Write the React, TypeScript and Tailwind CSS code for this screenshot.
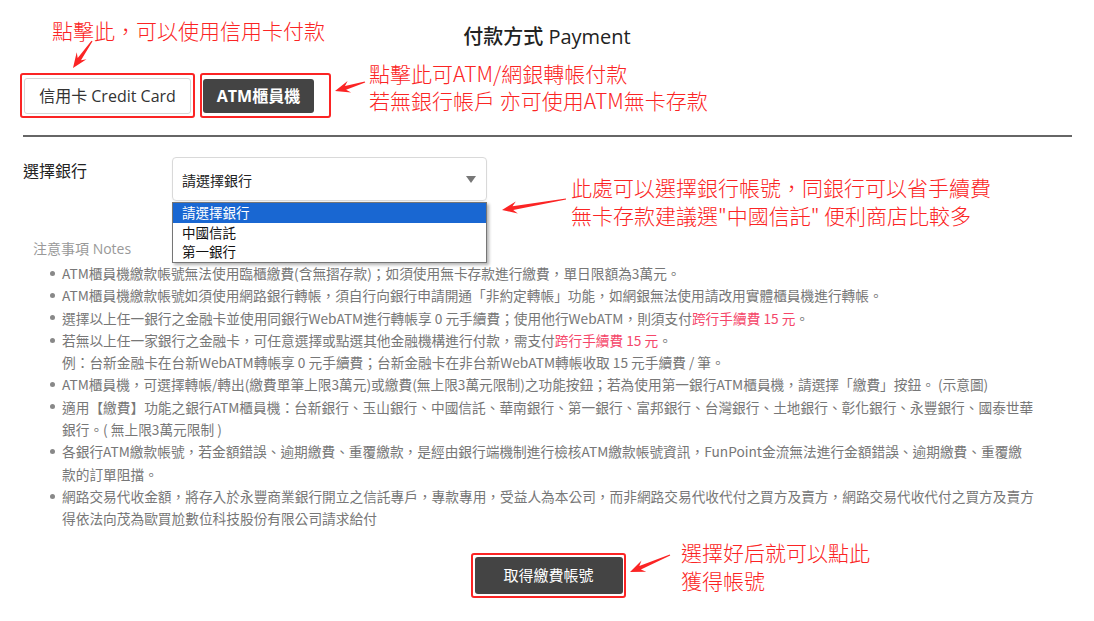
import React from "react";

const RED = "#fb2424";

function Arrow({ x1, y1, x2, y2 }: { x1: number; y1: number; x2: number; y2: number }) {
  const dx = x2 - x1;
  const dy = y2 - y1;
  const len = Math.hypot(dx, dy);
  const ux = dx / len;
  const uy = dy / len;
  const nx = -uy;
  const ny = ux;
  const L = 15;
  const w = 6;
  const bx = x2 - ux * L;
  const by = y2 - uy * L;
  const nbx = x2 - ux * (L - 4);
  const nby = y2 - uy * (L - 4);
  const p = (x: number, y: number) => `${x.toFixed(1)},${y.toFixed(1)}`;
  const pts = [
    p(x1 + nx * 0.6, y1 + ny * 0.6),
    p(nbx + nx * 2, nby + ny * 2),
    p(bx + nx * w, by + ny * w),
    p(x2, y2),
    p(bx - nx * w, by - ny * w),
    p(nbx - nx * 2, nby - ny * 2),
    p(x1 - nx * 0.6, y1 - ny * 0.6),
  ].join(" ");
  return <polygon points={pts} fill={RED} />;
}

const notes: React.ReactNode[] = [
  <>ATM櫃員機繳款帳號無法使用臨櫃繳費(含無摺存款)；如須使用無卡存款進行繳費，單日限額為3萬元。</>,
  <>ATM櫃員機繳款帳號如須使用網路銀行轉帳，須自行向銀行申請開通「非約定轉帳」功能，如網銀無法使用請改用實體櫃員機進行轉帳。</>,
  <>
    選擇以上任一銀行之金融卡並使用同銀行WebATM進行轉帳享 0 元手續費；使用他行WebATM，則須支付
    <span className="text-[#f5476a]">跨行手續費 15 元</span>。
  </>,
  <>
    若無以上任一家銀行之金融卡，可任意選擇或點選其他金融機構進行付款，需支付
    <span className="text-[#f5476a]">跨行手續費 15 元</span>。
    <br />
    例：台新金融卡在台新WebATM轉帳享 0 元手續費；台新金融卡在非台新WebATM轉帳收取 15 元手續費 / 筆。
  </>,
  <>ATM櫃員機，可選擇轉帳/轉出(繳費單筆上限3萬元)或繳費(無上限3萬元限制)之功能按鈕；若為使用第一銀行ATM櫃員機，請選擇「繳費」按鈕。 (示意圖)</>,
  <>
    適用【繳費】功能之銀行ATM櫃員機：台新銀行、玉山銀行、中國信託、華南銀行、第一銀行、富邦銀行、台灣銀行、土地銀行、彰化銀行、永豐銀行、國泰世華
    <br />
    銀行。( 無上限3萬元限制 )
  </>,
  <>
    各銀行ATM繳款帳號，若金額錯誤、逾期繳費、重覆繳款，是經由銀行端機制進行檢核ATM繳款帳號資訊，FunPoint金流無法進行金額錯誤、逾期繳費、重覆繳
    <br />
    款的訂單阻擋。
  </>,
  <>
    網路交易代收金額，將存入於永豐商業銀行開立之信託專戶，專款專用，受益人為本公司，而非網路交易代收代付之買方及賣方，網路交易代收代付之買方及賣方
    <br />
    得依法向茂為歐買尬數位科技股份有限公司請求給付
  </>,
];

export default function App() {
  return (
    <div
      className="relative w-[1094px] h-[621px] overflow-hidden bg-white px-[23px]"
      style={{ fontFamily: '"Open Sans", "Noto Sans CJK TC", sans-serif' }}
    >
      {/* Title */}
      <div className="pt-[23px] text-center text-[20px] leading-[28px] font-medium text-[#222]">
        付款方式 Payment
      </div>

      {/* Buttons */}
      <div className="mt-[22px] ml-[-3px] flex gap-[5px]">
        <div className="flex h-[45px] w-[175px] items-center justify-center rounded-[3px] border-2 border-[#fb2424]">
          <div className="flex h-[36px] w-[167px] items-center justify-center rounded-[3px] border border-[#d6d6d6] bg-white text-[16px] text-[#333]">
            信用卡 Credit Card
          </div>
        </div>
        <div className="flex h-[45px] w-[131px] items-center rounded-[3px] border-2 border-[#fb2424] pl-[1px]">
          <div className="flex h-[34px] w-[111px] items-center justify-center rounded-[3px] bg-[#444] text-[16px] font-bold text-white">
            ATM櫃員機
          </div>
        </div>
      </div>

      <div className="mt-[17px] h-[2px] w-[1049px] bg-[#666]" />

      {/* Select bank */}
      <div className="mt-[20px] flex">
        <div className="w-[149px] pt-[3px] text-[16px] leading-[22px] text-[#222]">選擇銀行</div>
        <div className="relative">
          <div className="flex h-[44px] w-[315px] items-center justify-between rounded-[4px] border border-[#d9d9d9] pl-[9px] pr-[10px] text-[14px] text-[#222] shadow-[0_1px_2px_rgba(0,0,0,0.06)]">
            <span className="pt-[2px]">請選擇銀行</span>
            <svg width="10" height="7" viewBox="0 0 10 7">
              <polygon points="0,0 10,0 5,7" fill="#777" />
            </svg>
          </div>
          <div className="absolute left-0 top-[45px] z-10 w-[315px] border border-[#767676] bg-white text-[13.5px] leading-[20px] text-[#111] shadow-[2px_2px_3px_rgba(0,0,0,0.3)]">
            <div className="h-[20px] bg-[#1967d2] pl-[9px] leading-[20px] text-white">請選擇銀行</div>
            <div className="h-[20px] pl-[9px]">中國信託</div>
            <div className="h-[19px] pl-[9px] leading-[19px]">第一銀行</div>
          </div>
        </div>
      </div>

      {/* Notes */}
      <div className="mt-[37px] pl-[10px] text-[14px] leading-[22px] text-[#999]">注意事項 Notes</div>
      <ul
        className="mt-[2px] pl-[27px] text-[13.7px] leading-[22.3px] text-[#777]"
        style={{ fontFamily: '"Noto Sans CJK TC", sans-serif' }}
      >
        {notes.map((n, i) => (
          <li key={i} className="flex">
            <span className="flex h-[22.3px] w-[12px] shrink-0 items-center">
              <span className="h-[5px] w-[5px] rounded-full bg-[#888]" />
            </span>
            <span className="whitespace-nowrap">{n}</span>
          </li>
        ))}
      </ul>

      {/* Bottom button */}
      <div className="mt-[23px] flex justify-center pl-[3px]">
        <div className="flex h-[45px] w-[155px] items-center justify-center rounded-[3px] border-2 border-[#fb2424]">
          <div className="flex h-[37px] w-[148px] items-center justify-center rounded-[3px] bg-[#444] text-[15px] text-white">
            取得繳費帳號
          </div>
        </div>
      </div>

      {/* Annotations */}
      <div
        className="pointer-events-none absolute inset-0 text-[21px] font-light text-[#fb2424]"
        style={{ fontFamily: '"Noto Sans CJK TC", sans-serif' }}
      >
        <div className="absolute left-[52px] top-[16px] whitespace-nowrap leading-[28px]">點擊此，可以使用信用卡付款</div>
        <div className="absolute left-[369px] top-[60px] flex flex-col gap-[1px] whitespace-nowrap leading-[26px]">
          <div>點擊此可ATM/網銀轉帳付款</div>
          <div>若無銀行帳戶 亦可使用ATM無卡存款</div>
        </div>
        <div className="absolute left-[571px] top-[173px] whitespace-nowrap leading-[28px]">
          <div>此處可以選擇銀行帳號，同銀行可以省手續費</div>
          <div>無卡存款建議選"中國信託" 便利商店比較多</div>
        </div>
        <div className="absolute left-[681px] top-[538px] whitespace-nowrap leading-[28px]">
          <div>選擇好后就可以點此</div>
          <div>獲得帳號</div>
        </div>
        <svg className="absolute left-0 top-0" width="1094" height="621">
          <Arrow x1={92} y1={41} x2={73} y2={68} />
          <Arrow x1={365} y1={82} x2={335} y2={91} />
          <Arrow x1={566} y1={199} x2={502} y2={210} />
          <Arrow x1={670} y1={555} x2={630} y2={572} />
        </svg>
      </div>
    </div>
  );
}
